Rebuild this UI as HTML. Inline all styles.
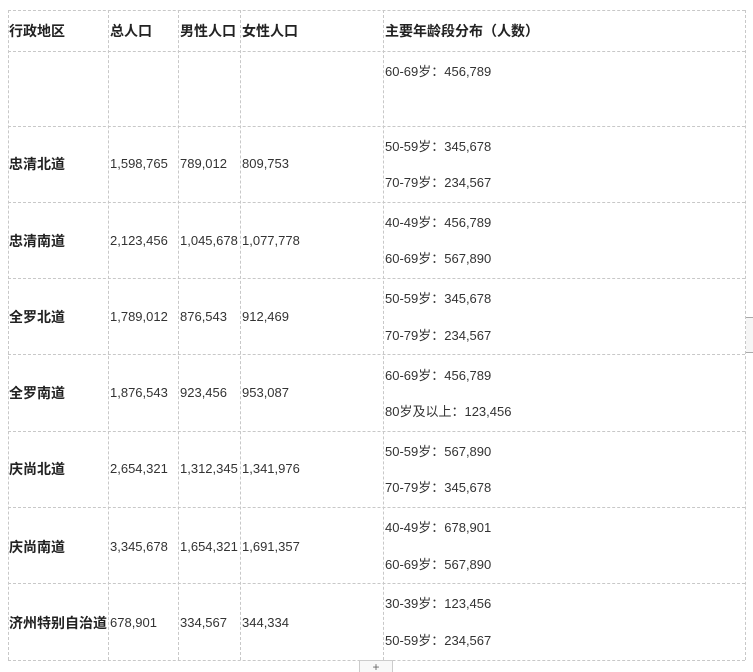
<!DOCTYPE html>
<html><head><meta charset="utf-8"><style>
html,body{margin:0;padding:0;background:#fff;width:753px;height:672px;overflow:hidden;position:relative;
font-family:"Liberation Sans","Noto Sans CJK SC",sans-serif;color:#333;font-size:13px}
.h{position:absolute;height:0;border-top:1px dashed #c8c8c8}
.v{position:absolute;width:0;border-left:1px dashed #c8c8c8}
.t{position:absolute;white-space:nowrap;line-height:18px;transform:translateY(-8px)}
.b{font-weight:bold;font-size:14px;color:#222}
.c{letter-spacing:1px}
</style></head><body>
<div class="h" style="left:8px;width:737px;top:10px"></div>
<div class="h" style="left:8px;width:737px;top:51px"></div>
<div class="h" style="left:8px;width:737px;top:126px"></div>
<div class="h" style="left:8px;width:737px;top:202px"></div>
<div class="h" style="left:8px;width:737px;top:278px"></div>
<div class="h" style="left:8px;width:737px;top:354px"></div>
<div class="h" style="left:8px;width:737px;top:431px"></div>
<div class="h" style="left:8px;width:737px;top:507px"></div>
<div class="h" style="left:8px;width:737px;top:583px"></div>
<div class="h" style="left:8px;width:737px;top:660px"></div>
<div class="v" style="top:10px;height:650px;left:8px"></div>
<div class="v" style="top:10px;height:650px;left:108px"></div>
<div class="v" style="top:10px;height:650px;left:178px"></div>
<div class="v" style="top:10px;height:650px;left:240px"></div>
<div class="v" style="top:10px;height:650px;left:383px"></div>
<div class="v" style="top:10px;height:650px;left:745px"></div>
<div style="position:absolute;left:746px;top:317px;width:7px;height:34px;border-top:1px solid #aaa;border-bottom:1px solid #aaa;background:#f6f6f6"></div>
<div style="position:absolute;left:359px;top:660px;width:32px;height:12px;border:1px solid #ccc;border-bottom:none;background:#f8f8f8;text-align:center;font-size:12px;line-height:12px;color:#666">+</div>

<div class="t b" style="left:9px;top:30px">行政地区</div>
<div class="t b" style="left:110px;top:30px">总人口</div>
<div class="t b" style="left:180px;top:30px">男性人口</div>
<div class="t b" style="left:242px;top:30px">女性人口</div>
<div class="t b" style="left:385px;top:30px">主要年龄段分布（人数）</div>

<div class="t" style="left:385px;top:71px">60-69岁：456,789</div>

<div class="t b" style="left:9px;top:163px">忠清北道</div>
<div class="t" style="left:110px;top:163px">1,598,765</div>
<div class="t" style="left:180px;top:163px">789,012</div>
<div class="t" style="left:242px;top:163px">809,753</div>
<div class="t" style="left:385px;top:146px">50-59岁：345,678</div>
<div class="t" style="left:385px;top:182px">70-79岁：234,567</div>

<div class="t b" style="left:9px;top:240px">忠清南道</div>
<div class="t" style="left:110px;top:240px">2,123,456</div>
<div class="t" style="left:180px;top:240px">1,045,678</div>
<div class="t" style="left:242px;top:240px">1,077,778</div>
<div class="t" style="left:385px;top:222px">40-49岁：456,789</div>
<div class="t" style="left:385px;top:258px">60-69岁：567,890</div>

<div class="t b" style="left:9px;top:316px">全罗北道</div>
<div class="t" style="left:110px;top:316px">1,789,012</div>
<div class="t" style="left:180px;top:316px">876,543</div>
<div class="t" style="left:242px;top:316px">912,469</div>
<div class="t" style="left:385px;top:298px">50-59岁：345,678</div>
<div class="t" style="left:385px;top:335px">70-79岁：234,567</div>

<div class="t b" style="left:9px;top:392px">全罗南道</div>
<div class="t" style="left:110px;top:392px">1,876,543</div>
<div class="t" style="left:180px;top:392px">923,456</div>
<div class="t" style="left:242px;top:392px">953,087</div>
<div class="t" style="left:385px;top:375px">60-69岁：456,789</div>
<div class="t" style="left:385px;top:411px">80岁及以上：123,456</div>

<div class="t b" style="left:9px;top:468px">庆尚北道</div>
<div class="t" style="left:110px;top:468px">2,654,321</div>
<div class="t" style="left:180px;top:468px">1,312,345</div>
<div class="t" style="left:242px;top:468px">1,341,976</div>
<div class="t" style="left:385px;top:451px">50-59岁：567,890</div>
<div class="t" style="left:385px;top:487px">70-79岁：345,678</div>

<div class="t b" style="left:9px;top:546px">庆尚南道</div>
<div class="t" style="left:110px;top:546px">3,345,678</div>
<div class="t" style="left:180px;top:546px">1,654,321</div>
<div class="t" style="left:242px;top:546px">1,691,357</div>
<div class="t" style="left:385px;top:527px">40-49岁：678,901</div>
<div class="t" style="left:385px;top:564px">60-69岁：567,890</div>

<div class="t b" style="left:9px;top:622px">济州特别自治道</div>
<div class="t" style="left:110px;top:622px">678,901</div>
<div class="t" style="left:180px;top:622px">334,567</div>
<div class="t" style="left:242px;top:622px">344,334</div>
<div class="t" style="left:385px;top:603px">30-39岁：123,456</div>
<div class="t" style="left:385px;top:640px">50-59岁：234,567</div>
</body></html>
